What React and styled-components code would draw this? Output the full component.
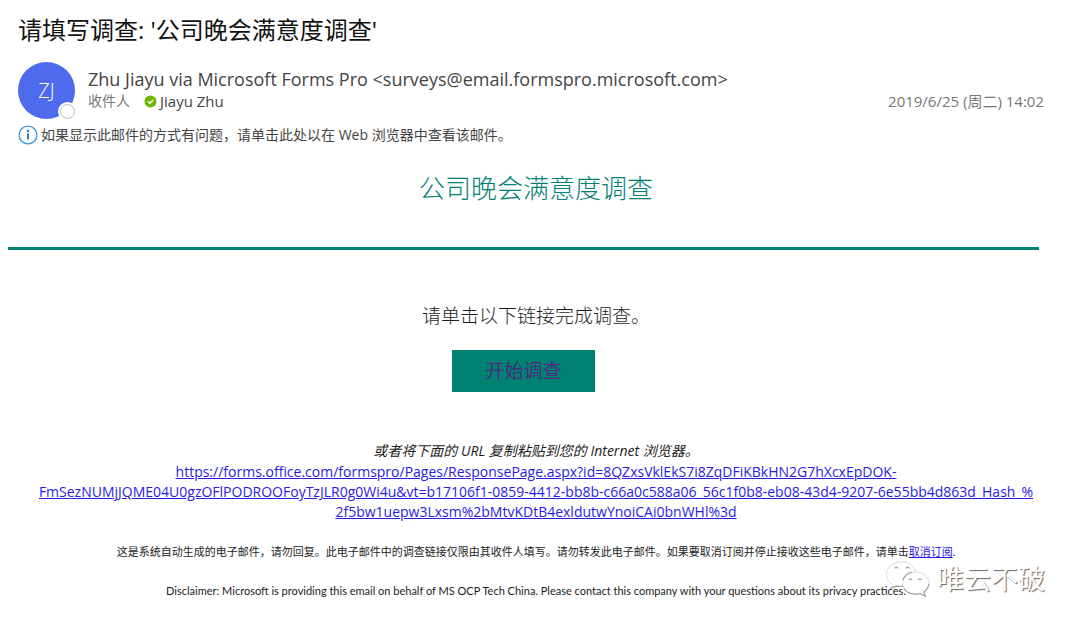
import React from "react";
import styled, { createGlobalStyle } from "styled-components";

const teal = "#008272";
const ui = '"Open Sans", "Noto Sans CJK SC", sans-serif';

const GlobalStyle = createGlobalStyle`
  * { box-sizing: border-box; }
  body {
    margin: 0;
    background: #fff;
    color: #1c1c1c;
    font-family: ${ui};
  }
  h1, h2, p { margin: 0; font-weight: 400; }
`;

const Mail = styled.main`
  position: relative;
  padding: 12px 36px 24px 18px;
`;

const Subject = styled.h1`
  font-size: 24px;
  line-height: 36px;
  color: #111;
`;

const Header = styled.header`
  display: flex;
  gap: 13px;
  margin-top: 14px;
`;

const Avatar = styled.div`
  position: relative;
  flex: none;
  display: grid;
  place-items: center;
  width: 57px;
  height: 57px;
  border-radius: 50%;
  background: #4f6bed;
  color: #fff;
  font-size: 20px;
  font-weight: 300;
`;

const Presence = styled.span`
  position: absolute;
  right: 0;
  bottom: 0;
  width: 15px;
  height: 15px;
  border: 1px solid #b4bcc2;
  border-radius: 50%;
  background: #fff;
  box-shadow: 0 0 0 2px #fff;
`;

const Details = styled.div`
  flex: 1;
  min-width: 0;
  padding-top: 5px;
`;

const Sender = styled.p`
  font-size: 18px;
  line-height: 24px;
  color: #444;
`;

const Meta = styled.div`
  display: flex;
  align-items: center;
  font-size: 15px;
  line-height: 20px;
  color: #777;
`;

const Label = styled.span`
  font-size: 14px;
`;

const Recipient = styled.span`
  display: flex;
  align-items: center;
  gap: 3px;
  margin-left: 14px;
  color: #444;
`;

const Sent = styled.time`
  margin-left: auto;
`;

const Notice = styled.p`
  display: flex;
  align-items: center;
  gap: 3px;
  margin-top: 6px;
  font-size: 14px;
  line-height: 20px;
  color: #444;
`;

const Content = styled.section`
  margin: 0 -20px 0 -10px;
  text-align: center;
`;

const Title = styled.h2`
  padding-top: 24px;
  font-size: 26px;
  line-height: 38px;
  color: ${teal};
  font-weight: 300;
`;

const Divider = styled.hr`
  height: 3px;
  margin: 40px 25px 0 0;
  border: 0;
  background: ${teal};
`;

const Prompt = styled.p`
  margin-top: 52px;
  font-size: 19px;
  line-height: 28px;
  font-weight: 300;
`;

const Action = styled.div`
  display: flex;
  justify-content: center;
  margin: 20px 25px 0 0;
`;

const StartLink = styled.a`
  padding: 7px 33px;
  background: ${teal};
  color: #4b2a80;
  font-size: 19px;
  line-height: 28px;
  text-decoration: none;
`;

const Alternative = styled.p`
  margin-top: 49px;
  font-size: 14px;
  line-height: 20px;
  font-style: italic;
`;

const Link = styled.a`
  color: #2a1ae6;
  text-decoration: underline;
`;

const Address = styled.p`
  margin-top: 1px;
  font-size: 14px;
  line-height: 20px;
`;

const Footnote = styled.p`
  margin-top: 21px;
  font-family: Lato, "Noto Sans CJK SC", sans-serif;
  font-size: 11px;
  line-height: 18px;
`;

const Watermark = styled.div`
  position: absolute;
  right: 35px;
  bottom: 25px;
  display: flex;
  align-items: center;
  gap: 6px;
  color: #fff;
  font-size: 27px;
  line-height: 40px;
  text-shadow: 1px 1px 1px #666;
  pointer-events: none;
`;

function Verified() {
  return (
    <svg width="13" height="13" viewBox="0 0 13 13" aria-hidden="true">
      <circle cx="6.5" cy="6.5" r="6" fill="#6bb700" />
      <path d="M3.8 6.6 5.7 8.3 9.2 4.9" fill="none" stroke="#fff" strokeWidth="1.4" />
    </svg>
  );
}

function Info() {
  return (
    <svg width="20" height="20" viewBox="0 0 20 20" aria-hidden="true">
      <circle cx="10" cy="10" r="8.9" fill="none" stroke="#3a96dd" strokeWidth="1.3" />
      <circle cx="10" cy="6" r="1.2" fill="#1979ca" />
      <path d="M10 8.4v6" stroke="#1979ca" strokeWidth="1.9" />
    </svg>
  );
}

function ChatLogo() {
  return (
    <svg width="46" height="38" viewBox="0 0 46 38" fill="none" aria-hidden="true">
      <g stroke="#d2d2d2" strokeWidth="0.8">
        <path d="M30.500 11.500C29 6 24 2 17 2 8 2 1.500 7.500 1.500 14.500c0 4 2 7.300 5.500 9.600L5.500 28.500l5.700-2.600c2 .5 4.300.7 6.600.6" />
        <path d="M30.500 12C23 12 17.500 17 17.500 23S23 34.200 30.500 34.200c1.800 0 3.400-.2 4.800-.7l5 2.700-1.400-4.200c3.200-2.200 5-5.200 5-9C43.900 17 38 12 30.500 12Z" />
      </g>
      <path
        d="M5.500 28.500 11.200 25.900q3 .8 6.600.6M18 20q2-6.500 9-7.800M19 28.500q3.500 5.700 11.500 5.700 2.500 0 4.800-.7l5 2.700-1.400-4.200q4.300-3 5-8"
        stroke="#999"
        strokeWidth="1.1"
      />
      <path
        d="M9.500 8.500q1.700-3 3.500 0M21 8.500q1.700-3 3.500 0M24 20q1.500-2.600 3 0M33.500 20q1.500-2.600 3 0"
        stroke="#888"
        strokeWidth="1.1"
      />
    </svg>
  );
}

export default function App() {
  return (
    <>
      <GlobalStyle />
      <Mail>
        <Subject>请填写调查: '公司晚会满意度调查'</Subject>
        <Header>
          <Avatar>
            ZJ
            <Presence />
          </Avatar>
          <Details>
            <Sender>Zhu Jiayu via Microsoft Forms Pro &lt;surveys@email.formspro.microsoft.com&gt;</Sender>
            <Meta>
              <Label>收件人</Label>
              <Recipient>
                <Verified />
                Jiayu Zhu
              </Recipient>
              <Sent dateTime="2019-06-25T14:02">2019/6/25 (周二) 14:02</Sent>
            </Meta>
          </Details>
        </Header>
        <Notice>
          <Info />
          如果显示此邮件的方式有问题，请单击此处以在 Web 浏览器中查看该邮件。
        </Notice>
        <Content>
          <Title>公司晚会满意度调查</Title>
          <Divider />
          <Prompt>请单击以下链接完成调查。</Prompt>
          <Action>
            <StartLink href="#survey">开始调查</StartLink>
          </Action>
          <Alternative>或者将下面的 URL 复制粘贴到您的 Internet 浏览器。</Alternative>
          <Address>
            <Link href="#survey">
              https://forms.office.com/formspro/Pages/ResponsePage.aspx?id=8QZxsVklEkS7i8ZqDFiKBkHN2G7hXcxEpDOK-
              <br />
              FmSezNUMjJQME04U0gzOFlPODROOFoyTzJLR0g0Wi4u&amp;vt=b17106f1-0859-4412-bb8b-c66a0c588a06_56c1f0b8-eb08-43d4-9207-6e55bb4d863d_Hash_%
              <br />
              2f5bw1uepw3Lxsm%2bMtvKDtB4exldutwYnoiCAi0bnWHl%3d
            </Link>
          </Address>
          <Footnote>
            这是系统自动生成的电子邮件，请勿回复。此电子邮件中的调查链接仅限由其收件人填写。请勿转发此电子邮件。如果要取消订阅并停止接收这些电子邮件，请单击
            <Link href="#unsubscribe">取消订阅</Link>.
          </Footnote>
          <Footnote>
            Disclaimer: Microsoft is providing this email on behalf of MS OCP Tech China. Please contact this company with your questions about its privacy practices.
          </Footnote>
        </Content>
        <Watermark>
          <ChatLogo />
          唯云不破
        </Watermark>
      </Mail>
    </>
  );
}
